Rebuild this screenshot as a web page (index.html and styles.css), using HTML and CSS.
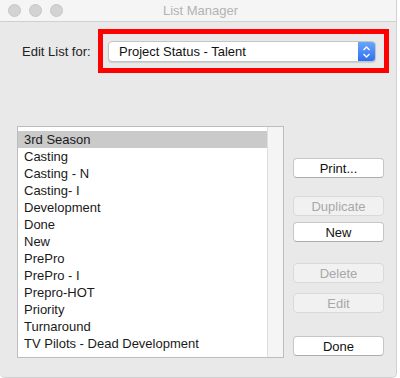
FILE: index.html
```html
<!DOCTYPE html>
<html lang="en">
  <head>
    <meta charset="UTF-8" />
    <meta name="viewport" content="width=device-width, initial-scale=1.0" />
    <title>List Manager</title>
    <link rel="stylesheet" href="styles.css">
  </head>
  <body>
    <div class="window">
      <div class="titlebar">
        <div class="lights">
          <span></span>
          <span></span>
          <span></span>
        </div>
        <div class="title">List Manager</div>
      </div>
      <div class="content">
        <div class="pick-row">
          <label class="pick-label">Edit List for:</label>
          <div class="mark">
            <div class="popup">
              <span class="popup-text">Project Status - Talent</span>
              <span class="stepper">
                <svg width="9" height="14" viewBox="0 0 9 14">
                  <path d="M1.5 5 L4.5 2 L7.5 5" fill="none" stroke="#fff" stroke-width="1.4" />
                  <path d="M1.5 9 L4.5 12 L7.5 9" fill="none" stroke="#fff" stroke-width="1.4" />
                </svg>
              </span>
            </div>
          </div>
        </div>
        <div class="main">
          <div class="list">
            <div class="rows">
              <div class="row selected">3rd Season</div>
              <div class="row">Casting</div>
              <div class="row">Casting - N</div>
              <div class="row">Casting- I</div>
              <div class="row">Development</div>
              <div class="row">Done</div>
              <div class="row">New</div>
              <div class="row">PrePro</div>
              <div class="row">PrePro - I</div>
              <div class="row">Prepro-HOT</div>
              <div class="row">Priority</div>
              <div class="row">Turnaround</div>
              <div class="row">TV Pilots - Dead Development</div>
            </div>
            <div class="track"></div>
          </div>
          <div class="buttons">
            <button class="btn btn-print">Print...</button>
            <button class="btn btn-dup" disabled>Duplicate</button>
            <button class="btn btn-new">New</button>
            <button class="btn btn-delete" disabled>Delete</button>
            <button class="btn btn-edit" disabled>Edit</button>
            <button class="btn btn-done">Done</button>
          </div>
        </div>
      </div>
    </div>
  </body>
</html>
```

FILE: styles.css
```css
body {
  margin: 0;
  background: #fff;
  font-family: 'Liberation Sans', Arial, sans-serif;
  font-size: 13px;
  color: #1a1a1a;
}
.window {
  width: 396px;
  height: 377px;
  background: #e9e9e9;
  border-right: 1px solid #d2d2d2;
  border-bottom: 1px solid #d2d2d2;
  border-radius: 0 0 5px 5px;
  display: flex;
  flex-direction: column;
  overflow: hidden;
}
/* title bar */
.titlebar {
  height: 21px;
  border-bottom: 1px solid #d0d0d0;
  background: #f5f5f5;
  display: flex;
  align-items: center;
  position: relative;
}
.lights {
  display: flex;
  gap: 8px;
  padding-left: 8px;
}
.lights span {
  width: 11px;
  height: 11px;
  border-radius: 50%;
  background: #d3d3d3;
  border: 0.5px solid #c6c6c6;
}
.title {
  flex: 1;
  text-align: center;
  color: #b3b3b3;
  font-size: 13px;
  margin-right: 58px;
}
/* content */
.content {
  display: flex;
  flex-direction: column;
  padding: 7px 0 0 17px;
}
.pick-row {
  display: flex;
  align-items: center;
  padding-left: 5px;
}
.pick-label {
  width: 76px;
  color: #222;
}
.mark {
  border: 5px solid #f00;
  padding: 7px 8px 6px 5px;
  width: 268px;
}
.popup {
  display: flex;
  height: 21px;
  background: #fff;
  border: 1px solid #c4c4c4;
  border-radius: 4px;
  box-shadow: 0 1px 1px rgba(0, 0, 0, 0.12);
  box-sizing: border-box;
  overflow: hidden;
}
.popup-text {
  flex: 1;
  padding-left: 10px;
  line-height: 19px;
  color: #111;
}
.stepper {
  width: 17px;
  display: flex;
  align-items: center;
  justify-content: center;
  background: linear-gradient(#6aa6fa, #2c70f4);
}
.main {
  display: flex;
  margin-top: 53px;
}
.list {
  width: 265px;
  height: 230px;
  display: flex;
  background: #fff;
  border: 1px solid #bdbdbd;
}
.rows {
  flex: 1;
  padding-top: 4px;
}
.row {
  height: 17px;
  line-height: 17px;
  padding-left: 6px;
  white-space: nowrap;
}
.row.selected {
  background: #cacaca;
}
.track {
  width: 15px;
  background: #f5f5f5;
  border-left: 1px solid #dedede;
}
/* buttons */
.buttons {
  display: flex;
  flex-direction: column;
  margin-left: 9px;
}
.btn {
  width: 91px;
  height: 20px;
  padding: 0;
  font-family: 'Liberation Sans', Arial, sans-serif;
  font-size: 13px;
  color: #111;
  background: #fff;
  border: 1px solid #c6c6c6;
  border-bottom-color: #adadad;
  border-radius: 4px;
}
.btn:disabled {
  background: #f1f1f1;
  border-color: #d9d9d9;
  color: #a8a8a8;
}
.btn-print {
  margin-top: 32px;
}
.btn-dup {
  margin-top: 18px;
}
.btn-new {
  margin-top: 6px;
}
.btn-delete {
  margin-top: 21px;
}
.btn-edit {
  margin-top: 10px;
}
.btn-done {
  margin-top: 23px;
}
```
